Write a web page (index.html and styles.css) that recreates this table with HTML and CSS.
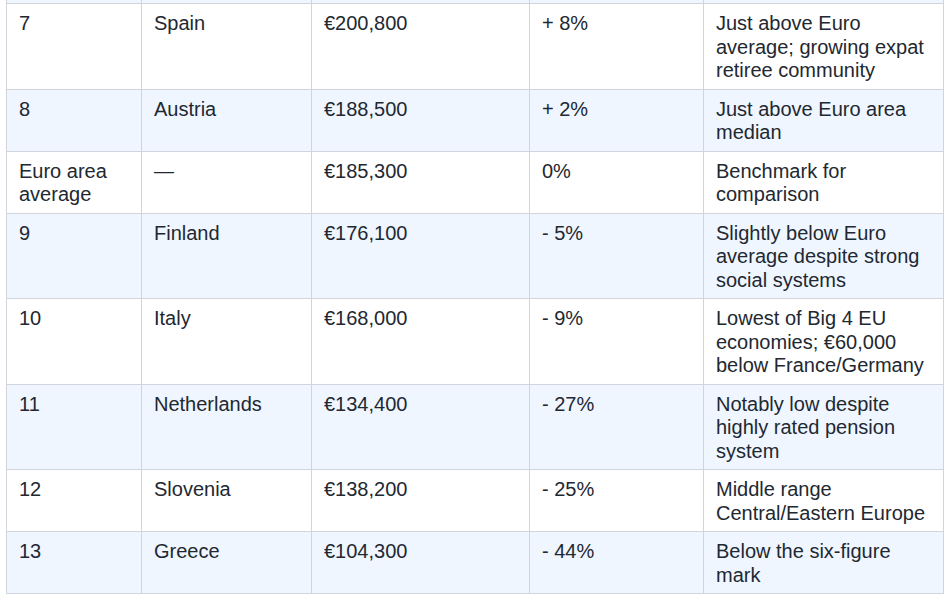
FILE: index.html
```html
<!DOCTYPE html>
<html lang="en">
<head>
<meta charset="utf-8">
<title>Median net wealth in the Euro area</title>
<link rel="stylesheet" href="styles.css">
</head>
<body>
<div class="wrap">
<table class="data">
  <colgroup>
    <col class="c1"><col class="c2"><col class="c3"><col class="c4"><col class="c5">
  </colgroup>
  <tbody>
    <tr class="cut alt"><td></td><td></td><td></td><td></td><td></td></tr>
    <tr><td>7</td><td>Spain</td><td>€200,800</td><td>+ 8%</td><td>Just above Euro average; growing expat retiree community</td></tr>
    <tr class="alt"><td>8</td><td>Austria</td><td>€188,500</td><td>+ 2%</td><td>Just above Euro area median</td></tr>
    <tr><td>Euro area average</td><td>—</td><td>€185,300</td><td>0%</td><td>Benchmark for comparison</td></tr>
    <tr class="alt"><td>9</td><td>Finland</td><td>€176,100</td><td>- 5%</td><td>Slightly below Euro average despite strong social systems</td></tr>
    <tr><td>10</td><td>Italy</td><td>€168,000</td><td>- 9%</td><td>Lowest of Big 4 EU economies; €60,000 below France/Germany</td></tr>
    <tr class="alt"><td>11</td><td>Netherlands</td><td>€134,400</td><td>- 27%</td><td>Notably low despite highly rated pension system</td></tr>
    <tr><td>12</td><td>Slovenia</td><td>€138,200</td><td>- 25%</td><td>Middle range Central/Eastern Europe</td></tr>
    <tr class="alt"><td>13</td><td>Greece</td><td>€104,300</td><td>- 44%</td><td>Below the six-figure mark</td></tr>
  </tbody>
</table>
</div>
</body>
</html>
```
FILE: styles.css
```css
html, body {
  margin: 0;
  padding: 0;
  background: #ffffff;
}
.wrap {
  padding: 0 6px;
}
.data {
  width: 937px;
  table-layout: fixed;
  border-collapse: collapse;
  font-family: "Liberation Sans", Arial, sans-serif;
  font-size: 20px;
  line-height: 23.5px;
  color: #222831;
}
.c1 { width: 135px; }
.c2 { width: 170px; }
.c3 { width: 218px; }
.c4 { width: 174px; }
.c5 { width: 240px; }
.data td {
  border: 1px solid #d1d5db;
  padding: 8px 12px 6px;
  vertical-align: top;
  text-align: left;
}
.data tr.alt td {
  background: #eff6ff;
}
.data tr.cut td {
  border-top: none;
  padding: 0;
  height: 3px;
  line-height: 0;
}
```
